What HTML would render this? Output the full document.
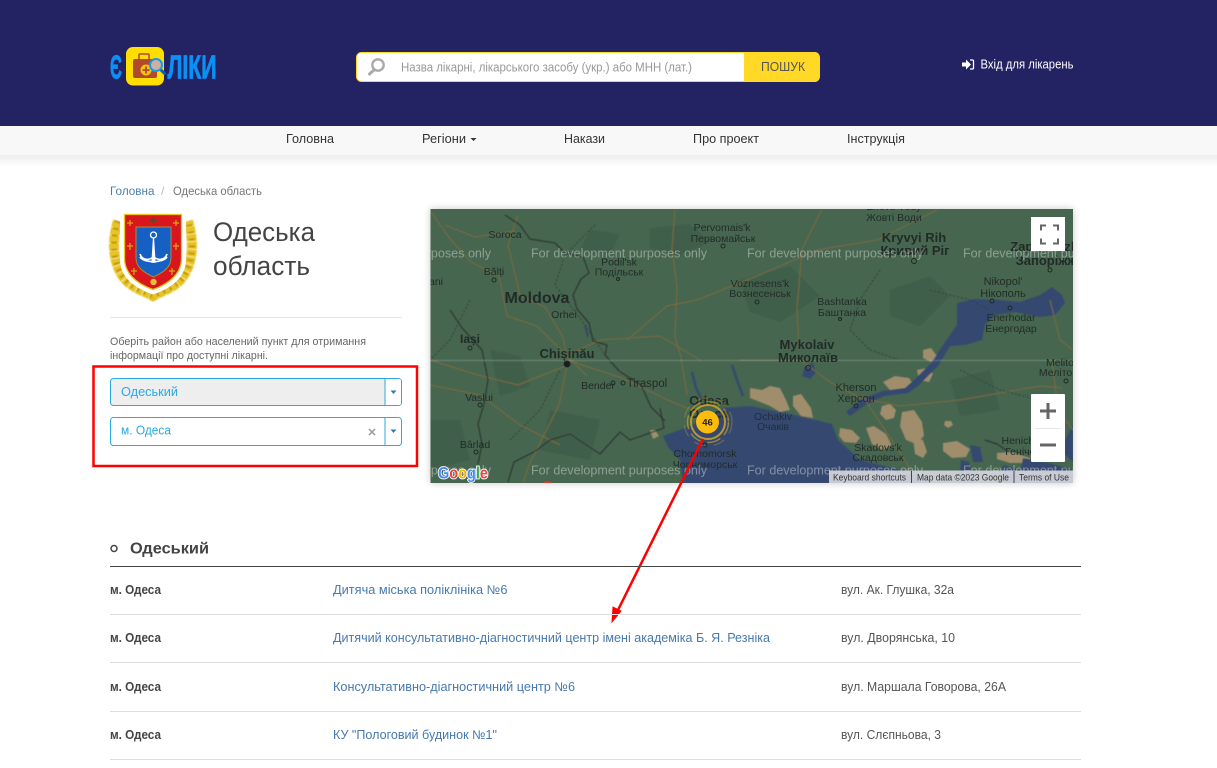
<!DOCTYPE html>
<html lang="uk"><head><meta charset="utf-8"><title>Одеська область</title>
<style>
html,body{margin:0;padding:0;background:#fff;width:1217px;height:768px;overflow:hidden}
svg{display:block}
text{font-family:"Liberation Sans",sans-serif}
.m text{fill:#232c26;font-size:10.5px;text-anchor:middle}
.m .b{font-weight:bold;font-size:13px}
.wm text{fill:#fff;fill-opacity:.38;font-size:13px}
.a{fill:#4679ae;font-size:12.5px}
.d{fill:#555;font-size:12.5px}
.c{fill:#444;font-size:12.5px;font-weight:bold}
.n{fill:#333;font-size:12.5px}
</style></head><body>
<svg width="1217" height="768" viewBox="0 0 1217 768" xmlns="http://www.w3.org/2000/svg">
<defs>
<clipPath id="mc"><rect x="430.5" y="209" width="642.5" height="274"/></clipPath>
<linearGradient id="ns" x1="0" y1="0" x2="0" y2="1"><stop offset="0" stop-color="#000" stop-opacity=".07"/><stop offset="1" stop-color="#000" stop-opacity="0"/></linearGradient>
<filter id="sh" x="-5%" y="-5%" width="110%" height="110%"><feGaussianBlur stdDeviation="4"/></filter>
<filter id="bl"><feGaussianBlur stdDeviation=".5"/></filter>
<filter id="bl2"><feGaussianBlur stdDeviation=".3"/></filter>
</defs>

<!-- header -->
<rect width="1217" height="126" fill="#232263"/>
<!-- logo -->
<text x="110" y="78.500" font-size="33" font-weight="bold" fill="#0b90f5" stroke="#0b90f5" stroke-width=".8" textLength="12" lengthAdjust="spacingAndGlyphs">Є</text>
<rect x="126" y="47" width="38" height="38.500" rx="7" fill="#ffde00"/>
<path d="M139 59v-4q0-1 1-1h8q1 0 1 1v4" fill="none" stroke="#b5472a" stroke-width="1.500"/>
<rect x="133" y="59" width="24" height="19" rx="2" fill="#b04a2c"/>
<circle cx="146" cy="70" r="5.500" fill="#f6c410"/>
<path d="M146 66.500v7M142.500 70h7" stroke="#b04a2c" stroke-width="1.800"/>
<path d="M160.500 69.500l5 5" stroke="#0a5fb0" stroke-width="3"/>
<circle cx="156" cy="65" r="6" fill="#cdb0a0" stroke="#1899ef" stroke-width="2"/>
<text x="167.500" y="78.500" font-size="33" font-weight="bold" fill="#0b90f5" stroke="#0b90f5" stroke-width=".8" textLength="49" lengthAdjust="spacingAndGlyphs">ЛІКИ</text>

<!-- search -->
<rect x="356.500" y="52.500" width="463" height="29" rx="5" fill="#fff" stroke="#ffd926"/>
<path d="M744 52h70q5.500 0 5.500 5.500v19q0 5.500-5.500 5.500h-70z" fill="#ffd926"/>
<circle cx="378" cy="65" r="5.700" fill="none" stroke="#aaa" stroke-width="2.400"/>
<path d="M374 70l-4.500 4" stroke="#aaa" stroke-width="3" stroke-linecap="round"/>
<text x="401" y="71.500" font-size="12.500" fill="#999" textLength="291" lengthAdjust="spacingAndGlyphs">Назва лікарні, лікарського засобу (укр.) або МНН (лат.)</text>
<text x="761" y="71" font-size="13" fill="#555" textLength="44" lengthAdjust="spacingAndGlyphs">ПОШУК</text>
<!-- login -->
<path d="M962 62.500h4v-3l5 5-5 5v-3h-4z" fill="#fff"/>
<path d="M970 60h2.500q1 0 1 1v7q0 1-1 1H970" fill="none" stroke="#fff" stroke-width="1.300"/>
<text x="980.500" y="68.500" font-size="12.500" fill="#fff" textLength="93" lengthAdjust="spacingAndGlyphs">Вхід для лікарень</text>

<!-- nav -->
<rect y="155" width="1217" height="12" fill="url(#ns)"/>
<rect y="126" width="1217" height="29" fill="#f8f8f8"/>
<text class="n" x="286" y="143" textLength="48" lengthAdjust="spacingAndGlyphs">Головна</text>
<text class="n" x="422" y="143" textLength="44" lengthAdjust="spacingAndGlyphs">Регіони</text>
<path d="M470.500 138h6l-3 3z" fill="#333"/>
<text class="n" x="564" y="143" textLength="41" lengthAdjust="spacingAndGlyphs">Накази</text>
<text class="n" x="693" y="143" textLength="66" lengthAdjust="spacingAndGlyphs">Про проект</text>
<text class="n" x="847" y="143" textLength="58" lengthAdjust="spacingAndGlyphs">Інструкція</text>

<!-- breadcrumb -->
<text x="110" y="195" font-size="12" fill="#4a7fa8" textLength="44.500" lengthAdjust="spacingAndGlyphs">Головна</text>
<text x="161" y="195" font-size="12" fill="#bbb">/</text>
<text x="173" y="195" font-size="12" fill="#777" textLength="89" lengthAdjust="spacingAndGlyphs">Одеська область</text>

<!-- crest -->
<g filter="url(#bl)">
<path d="M118 221C112 240 112 262 124 278C132 288 144 291 153 296C162 291 174 288 182 278C194 262 194 240 188 221" fill="none" stroke="#e6c425" stroke-width="10" stroke-dasharray="7 .6"/>
<path d="M118 221C112 240 112 262 124 278C132 288 144 291 153 296C162 291 174 288 182 278C194 262 194 240 188 221" fill="none" stroke="#c4960f" stroke-width="6" stroke-dasharray="2 5"/>
<path d="M153 295l-4 5h8z" fill="#e2bd1e"/>
</g>
<g filter="url(#bl2)">
<path d="M120 213.500h66v46c0 16-12 28-33 35-21-7-33-19-33-35z" fill="#fff"/>
<path d="M124.500 214.500h57v44c0 14-11 25-28.500 31-17.500-6-28.500-17-28.500-31z" fill="#d8141c" stroke="#e8c41a" stroke-width="1.300"/>
<path d="M136 227h35v31c0 9-7 14-17.500 19-10.500-5-17.500-10-17.500-19z" fill="#1661c4" stroke="#a88c3a" stroke-width="1"/>
<circle cx="153.500" cy="235" r="3" fill="none" stroke="#fff" stroke-width="1.300"/>
<path d="M153.500 238l1.500 24h-3z" stroke="#fff" stroke-width="1.200" fill="#fff"/>
<path d="M140 254c2 6 8 7 13.500 3 5.500 4 11.500 3 13.500-3M140 257c3 4 8 4 13.500 5 5.500-1 10.500-1 13.500-5" fill="none" stroke="#fff" stroke-width="1.700"/>
<path d="M130 220v6M127 223h6M176 220v6M173 223h6M130 243v7M127 246h6M176 243v7M173 246h6M134 268v7M131 271h6M172 268v7M169 271h6" stroke="#d8a818" stroke-width="1.200"/>
<path d="M153.500 217v7M150 220h7" stroke="#5a4a2a" stroke-width="1.800"/>
<circle cx="153.500" cy="282" r="3.200" fill="#e5c23a"/>
</g>

<!-- title -->
<text x="213" y="241" font-size="26.500" fill="#444" textLength="102" lengthAdjust="spacingAndGlyphs">Одеська</text>
<text x="213" y="275" font-size="26.500" fill="#444" textLength="97" lengthAdjust="spacingAndGlyphs">область</text>
<rect x="110" y="317" width="292" height="1" fill="#e5e5e5"/>
<text x="110" y="345" font-size="11" fill="#666" textLength="256" lengthAdjust="spacingAndGlyphs">Оберіть район або населений пункт для отримання</text>
<text x="110" y="359" font-size="11" fill="#666" textLength="158" lengthAdjust="spacingAndGlyphs">інформації про доступні лікарні.</text>

<!-- selects -->
<rect x="110.500" y="378.500" width="291" height="27" rx="3" fill="#eee" stroke="#29abe2"/>
<path d="M385 379h14q2 0 2 2v22q0 2-2 2h-14z" fill="#fff"/>
<path d="M385 378.500v27" stroke="#29abe2"/>
<path d="M390.500 390.500h6l-3 3.500z" fill="#2c7cb5"/>
<text x="121" y="396" font-size="13" fill="#29a9e8" textLength="57" lengthAdjust="spacingAndGlyphs">Одеський</text>
<rect x="110.500" y="417.500" width="291" height="28" rx="3" fill="#fff" stroke="#29abe2"/>
<path d="M385 417.500v28" stroke="#29abe2"/>
<path d="M390.500 429.500h6l-3 3.500z" fill="#2c7cb5"/>
<text x="121" y="434.500" font-size="13" fill="#29a9e8" textLength="50" lengthAdjust="spacingAndGlyphs">м. Одеса</text>
<path d="M369 429l6 6M375 429l-6 6" stroke="#999" stroke-width="1.500"/>
<rect x="93.500" y="366.500" width="323.500" height="99.500" fill="none" stroke="#f00" stroke-width="2.500"/>

<!-- map -->
<rect x="430.500" y="209" width="642.500" height="274" fill="#000" opacity=".22" filter="url(#sh)"/>
<g clip-path="url(#mc)">
<rect x="430" y="209" width="644" height="275" fill="#466650"/>
<g filter="url(#bl)">
<!-- darker vegetation -->
<g fill="#415f4b">
<path d="M650 228l40-4 20 18-30 14-30-8z"/><path d="M740 280l50-14 30 30-40 26-30-10z"/><path d="M490 350l30 6 10 30-30 10z"/><path d="M550 410l50 10-10 40-50-10z"/><path d="M890 290l40-14 20 20-30 30-30-10z"/><path d="M590 230l30 4-10 20-30-4z"/><path d="M430 420l30 0 10 40-40 10z"/><path d="M950 380l40-10 10 40-40 6z"/>
</g>
<!-- tan land -->
<g fill="#a08d6c">
<path d="M883 382l12-6 14 2 5 8-12 4-12 0z"/>
<path d="M917 370l10-2 6 6-4 8-10-2z"/>
<path d="M923 350l8-2 6 8-6 6-8-4z"/>
<path d="M750 388l12 2 8-4 10 2 6 12 4 10-10 2-10-6-10-4-10-4z"/>
<path d="M793 396l8-2 10 14 2 10-12-2-8-10z"/>
<path d="M882 406l8-2 6 6-2 8-8 2-6-6z"/>
<path d="M902 412l12-2 8 12 2 14-8 8-10-4-6-14z"/>
<path d="M840 428l12 2 8 8-4 5-12-1-5-6z"/>
<path d="M913 438l10 2 4 12-4 6-8-4z"/>
<path d="M943 443l14-2 13 8-4 8-14 1-9-7z"/>
<path d="M997 453l14-1 19 6v5l-20 0-13-4z"/>
<path d="M810 436l12-2 5 6-6 5-10-3z"/>
<path d="M945 421l6 0 2 4-5 3-4-3z"/>
<path d="M650 430l5 0 4 6-6 3z"/>
<path d="M966 319l7-3 2 4-6 6-4-2z"/>
<path d="M866 428l8-2 12 8 6 12-10 4-10-6z"/>
</g>
<!-- water -->
<g fill="#354a70">
<path d="M663 436L690 426L723 408L750 406L770 410L790 414L815 420L832 424L838 440L860 460L900 470L935 483L683 484L680 460L668 447Z"/>
<path d="M957 303L975 299L1000 300L1020 302L1040 295L1052 287L1062 295L1065 303L1055 315L1040 317L1015 312L995 315L985 325L982 340L965 345L950 346L938 366L918 386L908 393L884 396L864 406L850 416L846 412L860 400L882 391L905 388L914 380L932 362L945 342L957 325Z"/>
<path d="M1023 458L1045 462L1073 470L1073 484L1018 484Z"/>
<path d="M1073 425L1060 450L1073 462Z"/>
<path d="M970 445l10 2 3 15-10 0z"/>
<path d="M1003 465l16 5 6 14h-24z"/>
<path d="M805 366l8-3 3 10-6 6-8-3z"/>
<path d="M961 460l8 2 4 22h-14z"/>
</g>
<path d="M692 372l4 16 5 10" stroke="#354a70" stroke-width="2.500" fill="none"/>
<path d="M732 365l6 18 5 13" stroke="#354a70" stroke-width="2.500" fill="none"/>
<path d="M585 325l3 12" stroke="#354a70" stroke-width="2" fill="none"/>
<!-- roads -->
<g fill="none" stroke="#80693c" stroke-width="1">
<path d="M431 212l20 28 20 22 28 14 8 40 30 10 20 20 30 30" />
<path d="M518 215l-10 30 12 50 25 12 18 30 4 20"/>
<path d="M675 209l-3 40 5 38-2 50 6 20 6 38"/>
<path d="M700 360l-40-24-60 4-30 14"/>
<path d="M568 365l-50 20-40-10-48-15"/>
<path d="M567 365l-8 40-30 60-6 18"/>
<path d="M567 360l55 18 50 24 30 12"/>
<path d="M627 340l40-34 30-6 60-24 60-26 60-10 60-30"/>
<path d="M822 209l-20 40-5 60 2 40"/>
<path d="M740 360h60l30 22 30 16 40 8 60-6 80-14 22 2"/>
<path d="M1052 360l6 50 15 20"/>
<path d="M865 400l20 30 20 30 6 10"/>
<path d="M445 225l30 12 40-6"/>
<path d="M1050 300l10 40 13 10"/>
<path d="M430 385l50 10 40 30 40 20"/>
</g>
<!-- borders -->
<g fill="none" stroke="#2a2f2c" stroke-width="1">
<path d="M505 215l15 10 10 14 25 4 10 10 18 4 6 16-8 6-8 16 4 14 12 14 4 18 14 4-2 10 14 16 22 14 10 22 14 14"/>
<path d="M450 310l12 18 20 22 6 30-4 24-6 20 4 20-4 20"/>
<path d="M660 408l4 20-34 12-10-8-20 22-30-20-20 6-16 12-20 10-6 20"/>
<path d="M985 440l12 4 12 8"/>
</g>
<g fill="none" stroke="#2e3a31" stroke-width=".8" stroke-dasharray="2 2">
<path d="M595 225l-30 30-10 30 30 40 20 30"/>
<path d="M880 270l-20 30-10 30 20 20 30 10"/><path d="M930 290l40 10 20 10"/>
<path d="M470 300l-20 40-20 20"/><path d="M960 370l40 20 40 10"/><path d="M510 440l30-30 20-40"/>
</g>
<rect x="430" y="360" width="644" height="1" fill="#fff" opacity=".22"/>
<path d="M553 484a7 7 0 0 0-11 0z" fill="#e23a2a"/>
</g>

<!-- map labels -->
<g class="m" filter="url(#bl2)">
<text x="505" y="238">Soroca</text>
<text x="722" y="231">Pervomais'k</text><text x="723" y="242">Первомайськ</text>
<text x="619" y="265.500">Podil'sk</text><text x="619" y="275.500">Подільськ</text>
<text x="494" y="275">Bălți</text><text x="436" y="285">ani</text>
<text x="537" y="303" style="font-size:16px;font-weight:bold;">Moldova</text>
<text x="564" y="318">Orhei</text><text x="470" y="343" style="font-size:12px;font-weight:bold">Iași</text>
<text x="894" y="221">Жовті Води</text><text x="894" y="210">Zhovti Vody</text>
<text class="b" x="914" y="242">Kryvyi Rih</text><text class="b" x="915" y="255">Кривий Ріг</text>
<text class="b" x="1050" y="251">Zaporizhzhia</text><text class="b" x="1050" y="265">Запоріжжя</text>
<text x="1003" y="285" style="font-size:11px">Nikopol'</text><text x="1003" y="297" style="font-size:11px">Нікополь</text>
<text x="1011" y="321">Enerhodar</text><text x="1011" y="332">Енергодар</text>
<text x="842" y="305">Bashtanka</text><text x="842" y="316">Баштанка</text>
<text x="760" y="287">Voznesens'k</text><text x="760" y="297">Вознесенськ</text>
<text class="b" x="567" y="358">Chișinău</text>
<text x="598" y="389">Bender</text><text x="647" y="387" style="font-size:11.500px">Tiraspol</text>
<text x="479" y="401">Vaslui</text><text x="475" y="448">Bârlad</text>
<text class="b" x="709" y="405">Odesa</text><text class="b" x="709" y="418">Одеса</text>
<text x="705" y="457">Chornomorsk</text><text x="705" y="468">Чорноморськ</text>
<text class="b" x="807" y="349">Mykolaiv</text><text class="b" x="808" y="362">Миколаїв</text>
<text x="856" y="391" style="font-size:11px">Kherson</text><text x="856" y="402" style="font-size:11px">Херсон</text>
<text x="773" y="420" style="fill:#222c3c">Ochakiv</text><text x="773" y="430" style="fill:#222c3c">Очаків</text>
<text x="878" y="451">Skadovs'k</text><text x="878" y="461">Скадовськ</text>
<text x="1026" y="444">Henichesk</text><text x="1028" y="455">Генічеськ</text>
<text x="1067" y="366">Melitopol</text><text x="1067" y="376">Мелітополь</text>
</g>
<g fill="none" stroke="#1f2a22" stroke-width="1">
<circle cx="723" cy="246" r="2"/><circle cx="494" cy="280" r="2"/><circle cx="618" cy="279" r="1.500"/><circle cx="914" cy="261" r="2.500"/><circle cx="1050" cy="270" r="2"/><circle cx="992" cy="301" r="2"/><circle cx="1010" cy="308" r="2"/><circle cx="840" cy="319" r="1.500"/><circle cx="757" cy="302" r="2"/><circle cx="470" cy="348" r="2"/><circle cx="613" cy="383" r="2"/><circle cx="623" cy="383" r="2"/><circle cx="480" cy="405" r="2"/><circle cx="476" cy="452" r="2"/><circle cx="705" cy="445" r="2"/><circle cx="808" cy="368" r="2.500"/><circle cx="856" cy="406" r="2"/><circle cx="1066" cy="381" r="2"/>
</g>
<circle cx="567" cy="364" r="3" fill="#1c1c1c" stroke="#1f2a22"/>

<!-- watermarks -->
<g class="wm">
<text x="315" y="257.500" textLength="176" lengthAdjust="spacingAndGlyphs">For development purposes only</text>
<text x="531" y="257.500" textLength="176" lengthAdjust="spacingAndGlyphs">For development purposes only</text>
<text x="747" y="257.500" textLength="176" lengthAdjust="spacingAndGlyphs">For development purposes only</text>
<text x="963" y="257.500" textLength="176" lengthAdjust="spacingAndGlyphs">For development purposes only</text>
<text x="315" y="474.500" textLength="176" lengthAdjust="spacingAndGlyphs">For development purposes only</text>
<text x="531" y="474.500" textLength="176" lengthAdjust="spacingAndGlyphs">For development purposes only</text>
<text x="747" y="474.500" textLength="176" lengthAdjust="spacingAndGlyphs">For development purposes only</text>
<text x="963" y="474.500" textLength="176" lengthAdjust="spacingAndGlyphs">For development purposes only</text>
</g>

<!-- marker -->
<g fill="none" stroke="#e5b020">
<circle cx="708" cy="422" r="17" stroke-width="2" opacity=".75"/>
<circle cx="708" cy="422" r="20.500" stroke-width="1.500" stroke-dasharray="14 5" opacity=".55"/>
<circle cx="708" cy="422" r="24" stroke-width="1.200" stroke-dasharray="12 8" opacity=".3"/>
</g>
<circle cx="707.500" cy="422" r="11.500" fill="#fdbb0e"/>
<text x="707.500" y="425.500" font-size="9.500" font-weight="bold" fill="#222" text-anchor="middle">46</text>

<!-- google logo -->
<text x="438" y="478.500" font-size="16.500" font-weight="bold" textLength="50" lengthAdjust="spacingAndGlyphs" stroke="#fff" stroke-width="1.800" paint-order="stroke" filter="url(#bl2)"><tspan fill="#4a8af4">G</tspan><tspan fill="#e8453c">o</tspan><tspan fill="#f4b400">o</tspan><tspan fill="#4a8af4">g</tspan><tspan fill="#34a853">l</tspan><tspan fill="#e8453c">e</tspan></text>
</g>

<!-- attribution -->
<rect x="829" y="470.500" width="244" height="12.500" fill="#d4d6dc" opacity=".92"/>
<rect x="911" y="471" width="1" height="12" fill="#444"/><rect x="1013.500" y="471" width="1" height="12" fill="#444"/>
<text x="833" y="480.500" font-size="9.500" fill="#333" textLength="73" lengthAdjust="spacingAndGlyphs">Keyboard shortcuts</text>
<text x="917" y="480.500" font-size="9.500" fill="#333" textLength="92" lengthAdjust="spacingAndGlyphs">Map data ©2023 Google</text>
<text x="1019" y="480.500" font-size="9.500" fill="#333" textLength="50" lengthAdjust="spacingAndGlyphs">Terms of Use</text>

<!-- map controls -->
<rect x="1031" y="217" width="34" height="34" fill="#fff"/>
<path d="M1041 231v-5h5M1053 226h5v5M1058 239v5h-5M1046 244h-5v-5" transform="translate(0 -0.500)" fill="none" stroke="#666" stroke-width="2"/>
<rect x="1031" y="394" width="34" height="68" rx="1" fill="#fff"/>
<rect x="1035" y="428" width="26" height="1" fill="#e6e6e6"/>
<path d="M1048 403v16M1040 411h16M1040 445h16" stroke="#666" stroke-width="3"/>

<!-- arrow -->
<path d="M703 439L617 612" stroke="#f00" stroke-width="2.500"/>
<path d="M612 622l1-15 8 4z" fill="#f00" stroke="#f00" stroke-width="1"/>

<!-- table -->
<circle cx="114" cy="548.500" r="3" fill="none" stroke="#444" stroke-width="1.500"/>
<text x="130" y="553.500" font-size="16" font-weight="bold" fill="#444" textLength="79" lengthAdjust="spacingAndGlyphs">Одеський</text>
<rect x="110" y="566" width="971" height="1" fill="#444"/>
<g fill="#ddd"><rect x="110" y="614" width="971" height="1"/><rect x="110" y="662" width="971" height="1"/><rect x="110" y="711" width="971" height="1"/><rect x="110" y="759" width="971" height="1"/></g>

<text class="c" x="110" y="594" textLength="51" lengthAdjust="spacingAndGlyphs">м. Одеса</text>
<text class="a" x="333" y="594" textLength="174.500" lengthAdjust="spacingAndGlyphs">Дитяча міська поліклініка №6</text>
<text class="d" x="841" y="594" textLength="113" lengthAdjust="spacingAndGlyphs">вул. Ак. Глушка, 32а</text>

<text class="c" x="110" y="642" textLength="51" lengthAdjust="spacingAndGlyphs">м. Одеса</text>
<text class="a" x="333" y="642" textLength="437" lengthAdjust="spacingAndGlyphs">Дитячий консультативно-діагностичний центр імені академіка Б. Я. Резніка</text>
<text class="d" x="841" y="642" textLength="114" lengthAdjust="spacingAndGlyphs">вул. Дворянська, 10</text>

<text class="c" x="110" y="691" textLength="51" lengthAdjust="spacingAndGlyphs">м. Одеса</text>
<text class="a" x="333" y="691" textLength="242" lengthAdjust="spacingAndGlyphs">Консультативно-діагностичний центр №6</text>
<text class="d" x="841" y="691" textLength="165" lengthAdjust="spacingAndGlyphs">вул. Маршала Говорова, 26А</text>

<text class="c" x="110" y="739" textLength="51" lengthAdjust="spacingAndGlyphs">м. Одеса</text>
<text class="a" x="333" y="739" textLength="164" lengthAdjust="spacingAndGlyphs">КУ "Пологовий будинок №1"</text>
<text class="d" x="841" y="739" textLength="100" lengthAdjust="spacingAndGlyphs">вул. Слєпньова, 3</text>
</svg>
</body></html>
